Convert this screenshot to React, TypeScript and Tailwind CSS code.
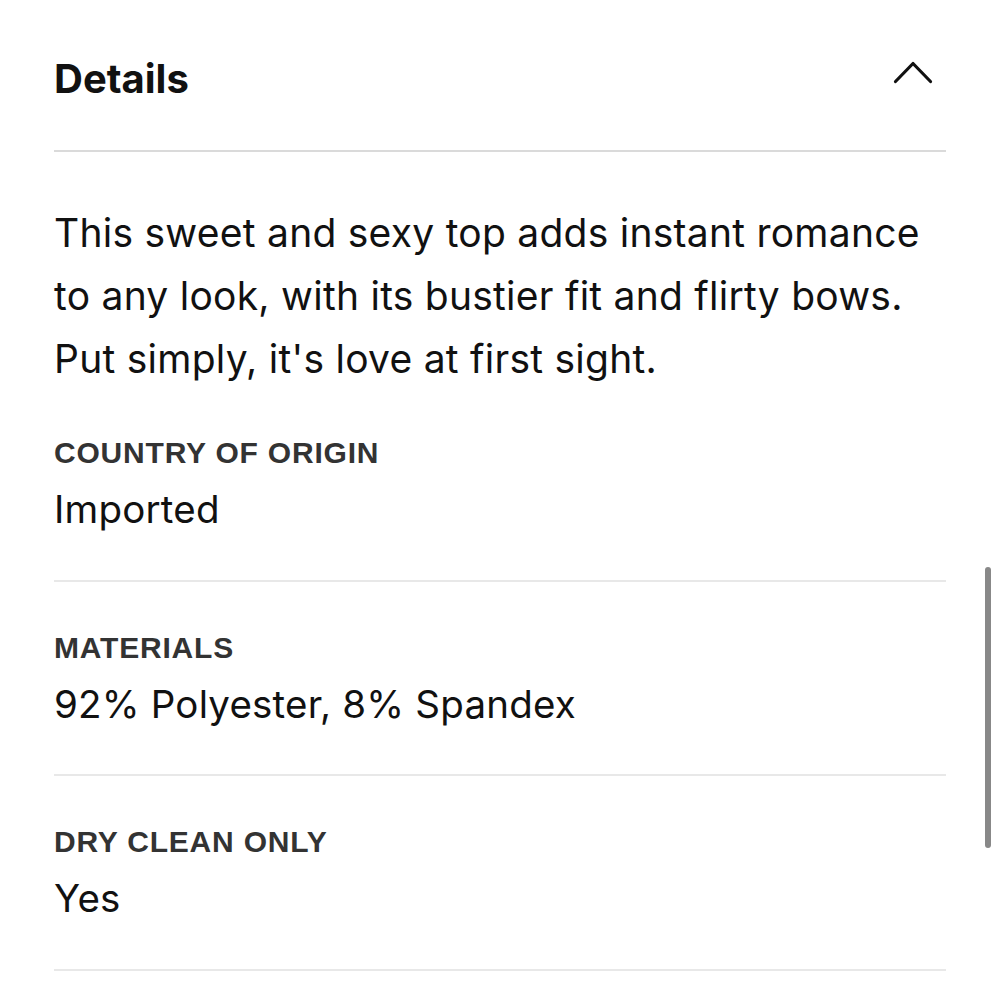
export default function App() {
  const specs = [
    { label: "Country of Origin", value: "Imported" },
    { label: "Materials", value: "92% Polyester, 8% Spandex" },
    { label: "Dry Clean Only", value: "Yes" },
  ];

  return (
    <div className="relative w-[1000px] h-[1000px] overflow-hidden bg-white font-['Inter',sans-serif] text-[#111]">
      <div className="px-[54px]">
        <div className="flex items-center justify-between pt-[59px] pb-[51px] border-b-2 border-[#dadada]">
          <h2 className="text-[40px] leading-none font-bold">Details</h2>
          <svg width="42" height="26" viewBox="0 0 42 26" className="-mt-[18px] -mb-[6px] mr-[12px]" fill="none">
            <polyline points="3.5,21.5 21,3.5 38.5,21.5" stroke="#111" strokeWidth="3.2" strokeLinecap="round" strokeLinejoin="round" />
          </svg>
        </div>

        <p className="mt-[49px] text-[39px] leading-[63px] tracking-[0.25px]">
          This sweet and sexy top adds instant romance to any look, with its bustier fit and flirty bows. Put simply, it's
          love at first sight.
        </p>

        {specs.map((s, i) => (
          <div
            key={s.label}
            className={`border-b-2 border-[#e8e8e8] pb-[51px] ${i === 0 ? "pt-[48px]" : "pt-[51px]"}`}
          >
            <div className="font-['Liberation_Sans',sans-serif] text-[30px] leading-none font-bold uppercase tracking-[0.8px] text-[#333]">
              {s.label}
            </div>
            <div className="mt-[22px] text-[38.5px] leading-none tracking-[0.2px]">{s.value}</div>
          </div>
        ))}
      </div>

      <div className="absolute right-[9px] top-[567px] w-[6px] h-[281px] rounded-full bg-[#888]" />
    </div>
  );
}
